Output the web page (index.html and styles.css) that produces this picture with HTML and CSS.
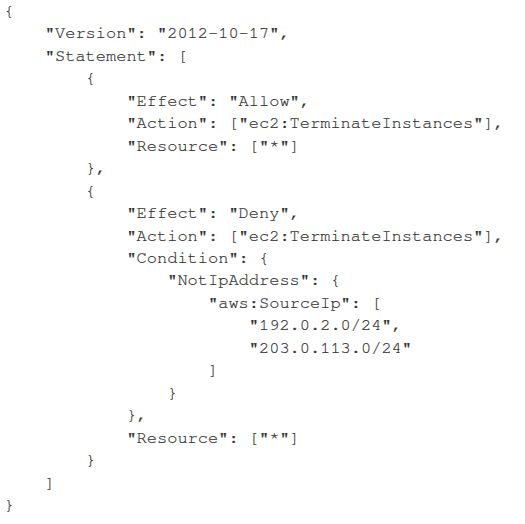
FILE: index.html
```html
<!DOCTYPE html>
<html>
<head>
<meta charset="utf-8">
<link rel="stylesheet" href="styles.css">
</head>
<body>
<pre class="code">{
    "Version": "2012-10-17",
    "Statement": [
        {
            "Effect": "Allow",
            "Action": ["ec2:TerminateInstances"],
            "Resource": ["*"]
        },
        {
            "Effect": "Deny",
            "Action": ["ec2:TerminateInstances"],
            "Condition": {
                "NotIpAddress": {
                    "aws:SourceIp": [
                        "192.0.2.0/24",
                        "203.0.113.0/24"
                    ]
                }
            },
            "Resource": ["*"]
        }
    ]
}</pre>
</body>
</html>
```
FILE: styles.css
```css
html, body {
  margin: 0;
  padding: 0;
  background: #ffffff;
}
.code {
  margin: 0;
  padding: 0 0 0 4px;
  font-family: "FreeMono", "Nimbus Mono PS", "Nimbus Mono L", "Liberation Mono", monospace;
  font-size: 17px;
  line-height: 22.45px;
  color: #333333;
  -webkit-text-stroke: 0.2px #333333;
}
```
